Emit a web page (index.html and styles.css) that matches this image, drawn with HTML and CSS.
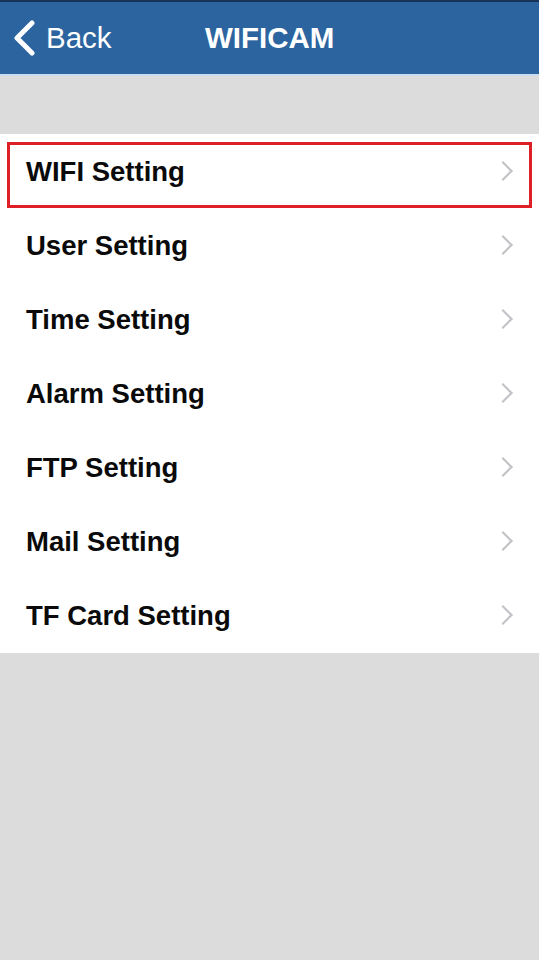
FILE: index.html
```html
<!DOCTYPE html>
<html lang="en">
<head>
  <meta charset="UTF-8">
  <meta name="viewport" content="width=device-width, initial-scale=1.0">
  <title>WIFICAM</title>
  <link rel="stylesheet" href="styles.css">
</head>
<body>

  <div class="navbar">
    <div class="back">
      <svg class="back-icon" width="24" height="36" viewBox="0 0 24 36">
        <path d="M20 3 L5 18 L20 33" fill="none" stroke="#fff" stroke-width="5" stroke-linecap="round" stroke-linejoin="round"/>
      </svg>
      <span>Back</span>
    </div>
    <div class="title">WIFICAM</div>
  </div>

  <div class="spacer"></div>

  <ul class="menu">
    <li class="item selected">WIFI Setting<span class="chevron"></span></li>
    <li class="item">User Setting<span class="chevron"></span></li>
    <li class="item">Time Setting<span class="chevron"></span></li>
    <li class="item">Alarm Setting<span class="chevron"></span></li>
    <li class="item">FTP Setting<span class="chevron"></span></li>
    <li class="item">Mail Setting<span class="chevron"></span></li>
    <li class="item">TF Card Setting<span class="chevron"></span></li>
  </ul>

</body>
</html>
```

FILE: styles.css
```css
body {
  margin: 0;
  background-color: #dcdcdc;
  font-family: "Liberation Sans", Arial, sans-serif;
}

.navbar {
  position: relative;
  height: 72px;
  background-color: #2c64a0;
  border-top: 2px solid #17335a;
  border-bottom: 2px solid #c9dced;
  display: flex;
  align-items: center;
  color: white;
}

.back {
  display: flex;
  align-items: center;
  padding-left: 12px;
  font-size: 29.5px;
}

.back-icon {
  margin-right: 10px;
}

.title {
  position: absolute;
  left: 205px;
  top: 19px;
  font-size: 29.5px;
  font-weight: bold;
}

.spacer {
  height: 58px;
}

.menu {
  list-style: none;
  margin: 0;
  padding: 0 0 1px;
  background-color: white;
}

.item {
  position: relative;
  height: 74px;
  box-sizing: border-box;
  display: flex;
  align-items: center;
  padding-left: 26px;
  padding-top: 2px;
  font-size: 27.5px;
  font-weight: bold;
  color: #0a0a0a;
}

.selected::after {
  content: "";
  position: absolute;
  left: 7px;
  right: 7px;
  top: 8px;
  bottom: 0;
  border: 3px solid #df1f27;
}

.chevron {
  position: absolute;
  right: 29px;
  top: 30px;
  width: 12px;
  height: 12px;
  border-top: 2px solid #c2c2c6;
  border-right: 2px solid #c2c2c6;
  transform: rotate(45deg);
}
```
